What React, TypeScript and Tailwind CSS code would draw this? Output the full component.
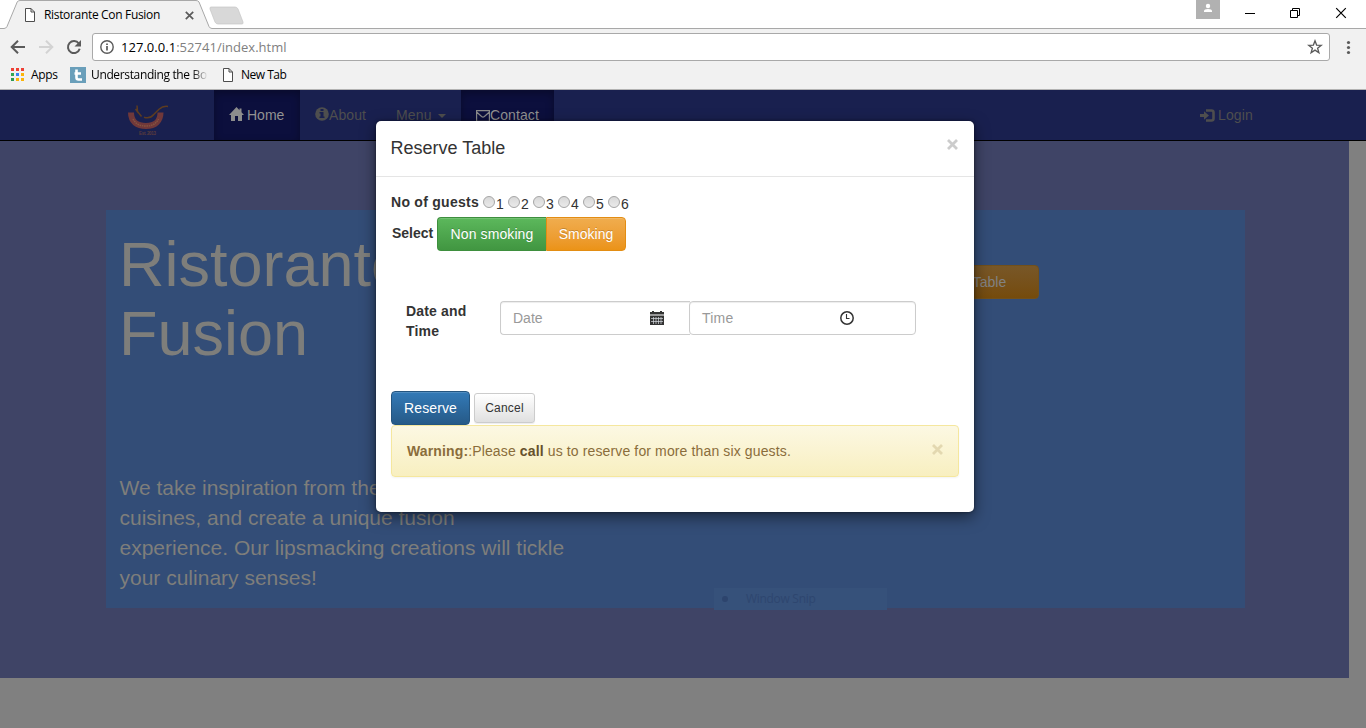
import React from "react";

const UI = "font-['Open_Sans','Noto_Sans',sans-serif]";

function PageIcon({ className = "" }: { className?: string }) {
  return (
    <svg width="10" height="14" viewBox="0 0 10 14" className={`shrink-0 ${className}`} fill="#fff" stroke="#4d4d4d" strokeWidth="1">
      <path d="M.5.5H6l3.500 3.500v9.500h-9zM6 .5V4h3.500" />
    </svg>
  );
}

function TabStrip() {
  return (
    <div className="relative flex h-[29px] bg-white">
      <svg width="1366" height="29" viewBox="0 0 1366 29" className="absolute left-0 top-0">
        <path d="M0 28.500H4q2 0 3-2L17.200 2Q18 .5 20 .5H196q2 0 3 1.500L209 26.500q1 2 3 2H1366V30H0z" fill="#f1f1f1" stroke="#a8a8a8" />
        <path d="M211 7h24q2 0 3 2l5 13q.6 2-1 2h-24q-2 0-3-2l-5-13q-.5-2 1-2z" fill="#d8d8d8" stroke="#c6c6c6" strokeWidth=".7" />
      </svg>
      <div className={`relative flex h-full w-full items-center pl-[25px] ${UI}`}>
        <PageIcon />
        <span className="ml-[9px] w-[120px] whitespace-nowrap text-[12px] tracking-[-0.33px] text-black">Ristorante Con Fusion</span>
        <svg width="9" height="9" viewBox="0 0 9 9" className="ml-[21px] mt-[1px]" stroke="#5a5a5a" strokeWidth="1.700">
          <path d="M.8.8l7.400 7.400M8.200.8L.8 8.200" />
        </svg>
        <div className="ml-auto flex h-[19px] w-6 self-start bg-[#b1b1b1]">
          <svg width="24" height="19" viewBox="0 0 24 19" fill="#fff">
            <circle cx="12" cy="6" r="2.200" />
            <path d="M8 12v-1q0-2 4-2t4 2v1z" />
          </svg>
        </div>
        <svg width="146" height="28" viewBox="0 0 146 28" className="self-start" fill="none" stroke="#000" strokeWidth="1">
          <path d="M25 13.500H35" />
          <path d="M70.500 10.500h7v7h-7zM72.500 10.500v-2h7v7h-2" />
          <path d="M116.200 8.200l9.600 9.600M125.800 8.200l-9.600 9.600" strokeWidth="1.200" />
        </svg>
      </div>
    </div>
  );
}

function Toolbar() {
  return (
    <div className={`flex h-[35px] items-center bg-[#f1f1f1] ${UI}`}>
      <svg width="92" height="35" viewBox="0 0 92 35" fill="none" strokeWidth="2" className="shrink-0">
        <path d="M25 18H12.500M18 11.700L11.700 18l6.300 6.300" stroke="#5a5a5a" />
        <path d="M39 18h12.500M46 11.700l6.300 6.300-6.300 6.300" stroke="#d3d3d3" />
        <path d="M78.800 14.500A6 6 0 1 0 79.700 19.800" stroke="#5a5a5a" />
        <path d="M81 11v6.500h-6.500z" fill="#5a5a5a" />
      </svg>
      <div className="mt-[1px] flex h-[28px] w-[1238px] items-center rounded-[3px] border border-[#a9a9a9] bg-white pl-[7px] text-[13px]">
        <svg width="14" height="14" viewBox="0 0 14 14" fill="none" stroke="#5a5a5a">
          <circle cx="7" cy="7" r="6.200" strokeWidth="1.400" />
          <path d="M7 6v4.500M7 3.400v1.700" strokeWidth="1.700" />
        </svg>
        <span className="ml-[7px] mt-[1px] whitespace-nowrap tracking-[0.03px] text-black">127.0.0.1<span className="text-[#808080]">:52741/index.html</span></span>
        <svg width="16" height="16" viewBox="0 0 16 16" className="ml-auto mr-[6px]" fill="none" stroke="#5a5a5a" strokeWidth="1.300">
          <path d="M8 1.800l1.600 4.300 4.700.2-3.700 2.900 1.300 4.500L8 11.100l-3.900 2.600 1.300-4.500L1.700 6.300l4.700-.2z" />
        </svg>
      </div>
      <svg width="36" height="35" viewBox="0 0 36 35" fill="#5a5a5a">
        <circle cx="18.500" cy="13.500" r="1.600" /><circle cx="18.500" cy="18.500" r="1.600" /><circle cx="18.500" cy="23.500" r="1.600" />
      </svg>
    </div>
  );
}

function Bookmarks() {
  return (
    <div className={`flex h-[26px] items-center border-b border-[#b3b3b3] bg-[#f1f1f1] pb-[4px] pl-[11px] text-[12px] text-black ${UI}`}>
      <svg width="13" height="13" viewBox="0 0 13 13" className="shrink-0">
        <path d="M0 0h3v3H0zM5 0h3v3H5zM10 0h3v3h-3z" fill="#ee4035" />
        <path d="M0 5h3v3H0z" fill="#34a853" /><path d="M5 5h3v3H5z" fill="#3a84f5" /><path d="M10 5h3v3h-3zM5 10h3v3H5zM10 10h3v3h-3z" fill="#fbb40a" /><path d="M0 10h3v3H0z" fill="#2d9a57" />
      </svg>
      <span className="ml-[7px] w-[39px] tracking-[-0.3px]">Apps</span>
      <svg width="16" height="16" viewBox="0 0 16 16" className="shrink-0">
        <path d="M0 0h16v16H0z" fill="#6a9fba" />
        <path d="M6.500 2.500v8q0 2 2 2H12M4.500 6.500H11" stroke="#fff" strokeWidth="2.600" fill="none" />
      </svg>
      <span className="ml-[5px] w-[116px] whitespace-nowrap bg-gradient-to-r from-black from-85% to-[#e4e4e4] bg-clip-text tracking-[-0.36px] text-transparent">Understanding the Bo</span>
      <PageIcon className="ml-[16px]" />
      <span className="ml-[8px] tracking-[-0.5px]">New Tab</span>
    </div>
  );
}

function Navbar() {
  return (
    <nav className="flex h-[51px] border-b border-black bg-[#19204f] text-[14px] text-[#4e4e4e]">
      <div className="w-[214px] pl-[127px] pt-[14px]">
        <svg width="42" height="32" viewBox="0 0 42 32" fill="none">
          <path d="M4 8.500c0 9 6 13.500 15 13.500s14.500-5 14.500-13.500" stroke="#70383a" strokeWidth="6" />
          <path d="M6 15c3 5.500 7 7 13 7s10-2 12.500-7" stroke="#865640" strokeWidth="1.400" strokeDasharray="1.500 .8" />
          <path d="M10 1.500l.5 6 4 5M8.500 5l3 4M17 13.200q6 2 10-3l5-5q4-3.500 9-2.700" stroke="#5d3c20" strokeWidth="1.500" />
          <text x="12" y="30.500" fontSize="4.500" fontWeight="bold" fill="#5d3c3c" textLength="17">Est. 2013</text>
        </svg>
      </div>
      <a className="flex h-[50px] w-[86px] items-center bg-[#0c0f3d] pl-[15px] text-[#929292] shadow-[inset_0_3px_9px_rgba(0,0,0,0.3)]">
        <svg width="15" height="14" viewBox="0 0 15 14" fill="#8c8c8c" className="-mt-[2px] mr-[3px]">
          <path d="M7.500 0L0 8h2v6h4V9h3v5h4V8h2l-2.500-2.700V1.500h-2v1.700z" />
        </svg>
        Home
      </a>
      <a className="flex h-[50px] w-[81px] items-center pl-[15px]">
        <svg width="14" height="14" viewBox="0 0 14 14" className="-mt-[2px]">
          <circle cx="7" cy="7" r="6.800" fill="#4e4e4e" />
          <path d="M5.500 2h3v2h-3zM4.500 5h4v4.500h1V11h-5V9.500h1v-3h-1z" fill="#19204f" />
        </svg>
        <span className="tracking-[0.1px]">About</span>
      </a>
      <a className="flex h-[50px] w-[80px] items-center pl-[15px]">
        <span className="tracking-[0.2px]">Menu</span>
        <span className="ml-[6px] mt-[2px] border-x-4 border-t-4 border-x-transparent border-t-[#4e4e4e]" />
      </a>
      <a className="flex h-[50px] w-[93px] items-center bg-[#0c0f3d] pl-[15px] text-[#929292] shadow-[inset_0_3px_9px_rgba(0,0,0,0.3)]">
        <svg width="14" height="12" viewBox="0 0 14 12" fill="none" stroke="#8c8c8c" className="mt-[1px]">
          <path d="M.6.6h12.800v10.800H.6zM.6 2l5 4.500q1.400 1.200 2.800 0l5-4.500" strokeWidth="1.200" />
        </svg>
        <span className="tracking-[0.1px]">Contact</span>
      </a>
      <a className="ml-auto mr-[113px] flex h-[50px] items-center">
        <svg width="15" height="13" viewBox="0 0 15 13" fill="none" stroke="#4e4e4e" className="mr-[3px]">
          <path d="M6 1.500H11.500q2 0 2 2v6q0 2-2 2H6" strokeWidth="2.600" />
          <path d="M0 5h4V2.300l5 4.200-5 4.200V8H0z" fill="#4e4e4e" stroke="none" />
        </svg>
        <span className="tracking-[0.15px]">Login</span>
      </a>
    </nav>
  );
}

function Hero() {
  return (
    <main className="h-[537px] w-[1349px] bg-[#3f4466] pl-[106px] pt-[69px] text-[#7e7e7b]">
      <section className="flex h-[398px] w-[1139px] bg-[#334d77] pl-[14px]">
        <div className="w-[455px]">
          <h1 className="-ml-[1px] pt-5 text-[63px] leading-[69px]">Ristorante Con Fusion</h1>
          <p className="-ml-[0.5px] mt-[105px] text-[21px] leading-[30px]">
            We take inspiration from the World's best cuisines, and create a unique fusion<br />experience. Our lipsmacking creations will tickle your culinary senses!
          </p>
        </div>
        <div className="relative flex-1">
          <button className="ml-[329px] mt-[55px] h-[34px] w-[135px] rounded border border-[#71501b] bg-gradient-to-b from-[#785727] to-[#754b0b] pl-[12px] text-left text-[14px] text-[#828282]">Reserve Table</button>
          <div className={`absolute left-[139px] top-[378px] flex h-[22px] w-[173px] items-center bg-[#36517a] pl-[8px] text-[12px] tracking-[-0.3px] text-[#2e466f] ${UI}`}>
            <span className="mr-[18px] size-[6px] rounded-full bg-[#2d446d]" />
            Window Snip
          </div>
        </div>
      </section>
    </main>
  );
}

function Radio({ n }: { n: number }) {
  return (
    <label className="flex w-[25px]">
      <span className="mt-[4px] size-3 shrink-0 rounded-full border border-[#a5a5a5] bg-gradient-to-b from-[#d8d8d8] to-[#eaeaea]" />
      <span className="ml-[1px] mt-[2px]">{n}</span>
    </label>
  );
}

function Close({ className = "" }: { className?: string }) {
  return (
    <svg width="11" height="11" viewBox="0 0 11 11" className={className} strokeWidth="2.800">
      <path d="M1 1l9 9M10 1l-9 9" />
    </svg>
  );
}

function ReserveModal() {
  return (
    <div className="h-[391px] w-[598px] rounded-[5px] bg-white text-[14px] leading-5 text-[#333] shadow-[0_5px_15px_rgba(0,0,0,0.5),0_0_3px_rgba(0,0,0,0.5)]">
      <header className="flex h-[56px] justify-between border-b border-[#e5e5e5] px-[15px] pt-[14px]">
        <h4 className="-ml-[0.5px] mt-[1px] text-[18px] leading-[25px]">Reserve Table</h4>
        <Close className="mr-[1px] mt-[4px] stroke-[#ccc]" />
      </header>
      <div className="px-[15px] pt-[15px]">
        <div className="flex h-[24px]">
          <b className="w-[92px] tracking-[0.27px]">No of guests</b>
          {[1, 2, 3, 4, 5, 6].map((n) => <Radio key={n} n={n} />)}
        </div>
        <div className="flex h-[34px] pt-[1px]">
          <b className="ml-[1px] w-[45px] pt-[6px]">Select</b>
          <button className="h-[34px] w-[109px] shrink-0 rounded-l border border-r-0 border-[#3e8f3e] bg-gradient-to-b from-[#5cb85c] to-[#419641] tracking-[0.1px] text-white shadow-[inset_0_1px_0_rgba(255,255,255,0.15)] [text-shadow:0_-1px_0_rgba(0,0,0,0.2)]">Non smoking</button>
          <button className="h-[34px] w-[80px] shrink-0 rounded-r border border-[#e38d13] bg-gradient-to-b from-[#f0ad4e] to-[#eb9316] text-white shadow-[inset_0_1px_0_rgba(255,255,255,0.15)] [text-shadow:0_-1px_0_rgba(0,0,0,0.2)]">Smoking</button>
        </div>
        <div className="mt-[51px] flex h-[90px] pl-[15px]">
          <b className="w-[94px] tracking-[0.17px]">Date and<br />Time</b>
          <div className="flex h-[34px] w-[190px] items-center rounded-l border border-r-0 border-[#ccc] pl-[12px] text-[#999] shadow-[inset_0_1px_1px_rgba(0,0,0,0.075)]">
            <span className="w-[137px]">Date</span>
            <svg width="14" height="14" viewBox="0 0 14 14">
              <path d="M0 1h2V0h2v1h6V0h2v1h2v2H0z" fill="#333" />
              <path d="M0 3h14v2H0z" fill="#999" />
              <path d="M0 5h14v9H0z" fill="#333" />
              <path d="M1 7.500h12M1 10.500h12M3.500 6v7M6 6v7M8.500 6v7M11 6v7" stroke="#d8dde2" strokeWidth=".7" />
            </svg>
          </div>
          <div className="-ml-[1px] flex h-[34px] w-[227px] items-center rounded border border-[#ccc] pl-[12px] text-[#999] shadow-[inset_0_1px_1px_rgba(0,0,0,0.075)]">
            <span className="w-[138px] tracking-[0.2px]">Time</span>
            <svg width="14" height="14" viewBox="0 0 14 14" fill="none" stroke="#333">
              <circle cx="7" cy="7" r="6.200" strokeWidth="1.500" /><path d="M6.500 3v4.500H9.500" strokeWidth="1.100" />
            </svg>
          </div>
        </div>
        <div className="flex h-[34px] items-center gap-1">
          <button className="h-[34px] w-[79px] rounded border border-[#245580] bg-gradient-to-b from-[#337ab7] to-[#265a88] tracking-[0.1px] text-white shadow-[inset_0_1px_0_rgba(255,255,255,0.15)]">Reserve</button>
          <button className="h-[30px] w-[61px] rounded-[3px] border border-[#ccc] bg-gradient-to-b from-white to-[#e0e0e0] text-[12px] tracking-[0.2px] shadow-[0_1px_1px_rgba(0,0,0,0.075)]">Cancel</button>
        </div>
        <div className="flex h-[52px] justify-between rounded border border-[#f5e79e] bg-gradient-to-b from-[#fcf8e3] to-[#f8efc0] px-[15px] pt-[15px] text-[#8a6d3b] shadow-[0_1px_2px_rgba(0,0,0,0.05)]">
          <p className="tracking-[0.13px]"><b>Warning:</b>:Please <b className="text-[#66512c]">call</b> us to reserve for more than six guests.</p>
          <Close className="mt-[3px] stroke-[#e3d8b0]" />
        </div>
      </div>
    </div>
  );
}

export default function App() {
  return (
    <div className="relative h-[728px] w-[1366px] overflow-hidden bg-[#808080] font-['Liberation_Sans',Arial,sans-serif]">
      <TabStrip />
      <Toolbar />
      <Bookmarks />
      <Navbar />
      <Hero />
      <div className="absolute inset-x-0 bottom-0 top-[90px] overflow-hidden">
        <div className="flex w-[1350px] justify-center pt-[31px]">
          <ReserveModal />
        </div>
      </div>
    </div>
  );
}
